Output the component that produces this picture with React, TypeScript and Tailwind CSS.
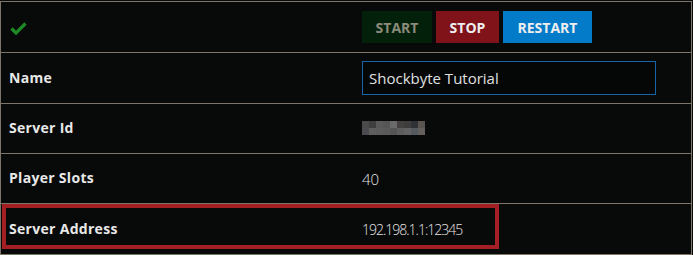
import React from 'react'

const pixels = [
  ['#4a4a4a', '#3e3e3e', '#5a5a5a', '#555555', '#6a6a6a', '#444040', '#3f3d3b', '#2e3236', '#5a5450'],
  ['#4c4c50', '#5e5e5e', '#5c5c5c', '#5a5a5a', '#555555', '#5e5e5e', '#646262', '#545a60', '#66605c'],
]

function Row({ label, children, tall, last }: { label?: string; children: React.ReactNode; tall?: boolean; last?: boolean }) {
  return (
    <div className={`flex items-center ${tall ? 'h-[51px]' : 'h-[50px]'} ${last ? '' : 'border-b border-[#7d7568]'}`}>
      <div className="w-[361px] pb-[2px] pl-[8px] text-[14px] font-bold tracking-[0.3px] text-[#e8e8e8]">{label}</div>
      <div className="flex-1">{children}</div>
    </div>
  )
}

export default function App() {
  return (
    <div className="h-[255px] w-[693px] bg-[#080a0a] pt-[1px]" style={{ fontFamily: '"Open Sans", sans-serif' }}>
      <div className="relative w-[692px] border border-[#7d7568] bg-[#080a0a]">
        <Row tall>
          <div className="flex gap-[4px]">
            <button className="h-[32px] w-[70px] bg-[#02200a] text-[14px] font-bold text-[#8b8b7b]">START</button>
            <button className="h-[32px] w-[63px] bg-[#80121a] text-[14px] font-bold text-[#eeeeee]">STOP</button>
            <button className="h-[32px] w-[89px] bg-[#047bc9] text-[14px] font-bold text-[#eeeeee]">RESTART</button>
          </div>
        </Row>
        <Row label="Name" tall>
          <input
            readOnly
            value="Shockbyte Tutorial"
            className="h-[34px] w-[294px] border border-[#1565a8] bg-[#050707] px-[6px] text-[15px] text-[#e0e0e0] outline-none"
          />
        </Row>
        <Row label="Server Id">
          <div className="flex flex-col pb-[2px]">
            {pixels.map((r, i) => (
              <div key={i} className="flex">
                {r.map((c, j) => (
                  <div key={j} className="h-[7px] w-[7px]" style={{ backgroundColor: c }} />
                ))}
              </div>
            ))}
          </div>
        </Row>
        <Row label="Player Slots">
          <span className="text-[15px] font-light text-[#e6e6e6]">40</span>
        </Row>
        <Row label="Server Address" last>
          <span className="text-[14px] font-light tracking-[-1px] text-[#e6e6e6]">192.198.1.1:12345</span>
        </Row>
        <div className="absolute left-[9px] top-[20px]">
          <svg width="17" height="13" viewBox="0 0 17 13">
            <path d="M1.5 6.5 L6 11 L15.5 1.5" fill="none" stroke="#1d8a25" strokeWidth="3.2" />
          </svg>
        </div>
        <div className="pointer-events-none absolute left-[1px] top-[202px] h-[45px] w-[497px] border-[4px] border-[#a31f24]" />
      </div>
    </div>
  )
}
